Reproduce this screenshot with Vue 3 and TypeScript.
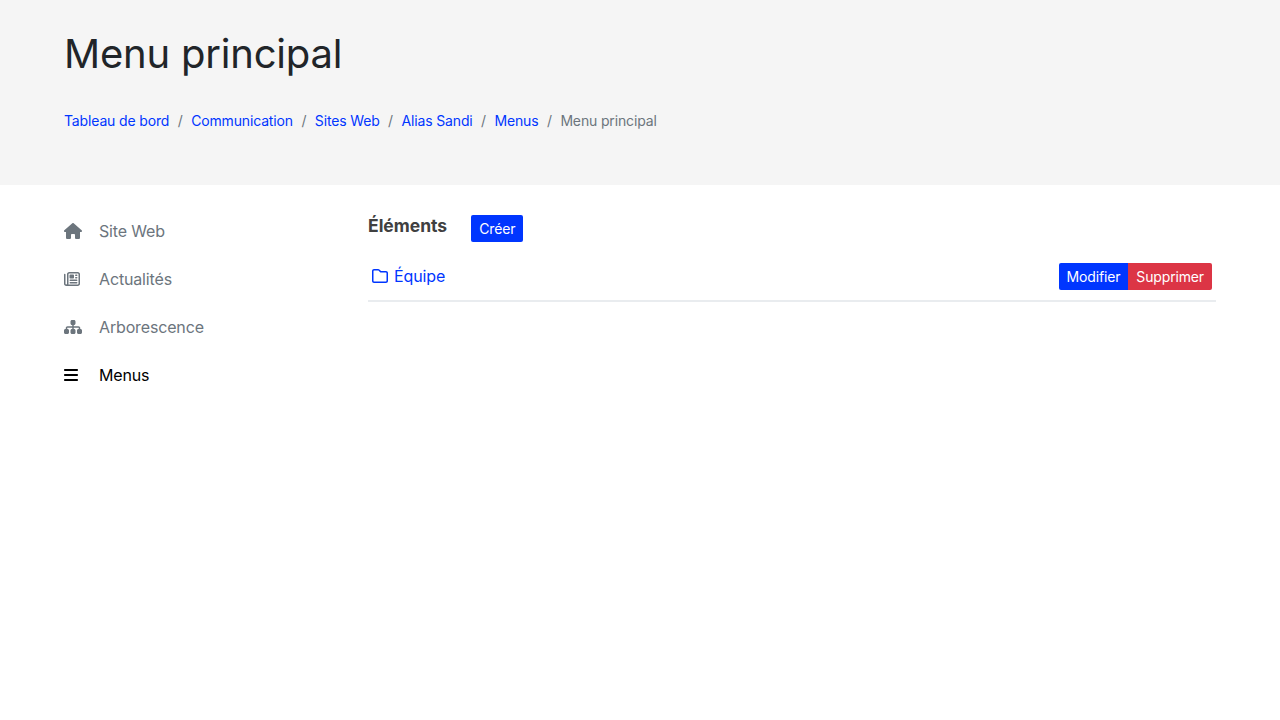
<script setup lang="ts">
interface Crumb {
  label: string
  active?: boolean
}

interface NavItem {
  label: string
  icon: string
  viewBox: string
  active?: boolean
}

const crumbs: Crumb[] = [
  { label: 'Tableau de bord' },
  { label: 'Communication' },
  { label: 'Sites Web' },
  { label: 'Alias Sandi' },
  { label: 'Menus' },
  { label: 'Menu principal', active: true },
]

const navItems: NavItem[] = [
  {
    label: 'Site Web',
    viewBox: '0 0 576 512',
    icon: 'M575.8 255.5c0 18-15 32.1-32 32.1h-32l.7 160.2c0 2.7-.2 5.4-.5 8.1V472c0 22.1-17.9 40-40 40H456c-1.1 0-2.2 0-3.3-.1c-1.4 .1-2.8 .1-4.2 .1H416 392c-22.1 0-40-17.9-40-40V448 384c0-17.7-14.3-32-32-32H256c-17.7 0-32 14.3-32 32v64 24c0 22.1-17.9 40-40 40H160 128.1c-1.5 0-3-.1-4.5-.2c-1.2 .1-2.4 .2-3.6 .2H104c-22.1 0-40-17.9-40-40V360c0-.9 0-1.9 .1-2.8V287.6H32c-18 0-32-14-32-32.1c0-9 3-17 10-24L266.4 8c7-7 15-8 22-8s15 2 21 7L564.8 231.5c8 7 12 15 11 24z',
  },
  {
    label: 'Actualités',
    viewBox: '0 0 512 512',
    icon: 'M168 80c-13.3 0-24 10.7-24 24V408c0 8.4-1.4 16.5-4.1 24H440c13.3 0 24-10.7 24-24V104c0-13.3-10.7-24-24-24H168zM72 480c-39.8 0-72-32.2-72-72V112C0 98.7 10.7 88 24 88s24 10.7 24 24V408c0 13.3 10.7 24 24 24s24-10.7 24-24V104c0-39.8 32.2-72 72-72H440c39.8 0 72 32.2 72 72V408c0 39.8-32.2 72-72 72H72zM176 136c0-13.3 10.7-24 24-24h96c13.3 0 24 10.7 24 24v80c0 13.3-10.7 24-24 24H200c-13.3 0-24-10.7-24-24V136zm200-24h32c13.3 0 24 10.7 24 24s-10.7 24-24 24H376c-13.3 0-24-10.7-24-24s10.7-24 24-24zm0 80h32c13.3 0 24 10.7 24 24s-10.7 24-24 24H376c-13.3 0-24-10.7-24-24s10.7-24 24-24zM200 272H408c13.3 0 24 10.7 24 24s-10.7 24-24 24H200c-13.3 0-24-10.7-24-24s10.7-24 24-24zm0 80H408c13.3 0 24 10.7 24 24s-10.7 24-24 24H200c-13.3 0-24-10.7-24-24s10.7-24 24-24z',
  },
  {
    label: 'Arborescence',
    viewBox: '0 0 576 512',
    icon: 'M208 80c0-26.5 21.5-48 48-48h64c26.5 0 48 21.5 48 48v64c0 26.5-21.5 48-48 48h-8v40H464c30.9 0 56 25.1 56 56v32h8c26.5 0 48 21.5 48 48v64c0 26.5-21.5 48-48 48H464c-26.5 0-48-21.5-48-48V368c0-26.5 21.5-48 48-48h8V288c0-4.4-3.6-8-8-8H312v40h8c26.5 0 48 21.5 48 48v64c0 26.5-21.5 48-48 48H256c-26.5 0-48-21.5-48-48V368c0-26.5 21.5-48 48-48h8V280H112c-4.4 0-8 3.6-8 8v32h8c26.5 0 48 21.5 48 48v64c0 26.5-21.5 48-48 48H48c-26.5 0-48-21.5-48-48V368c0-26.5 21.5-48 48-48h8V288c0-30.9 25.1-56 56-56H264V192h-8c-26.5 0-48-21.5-48-48V80z',
  },
  {
    label: 'Menus',
    viewBox: '0 0 448 512',
    active: true,
    icon: 'M0 96C0 78.3 14.3 64 32 64H416c17.7 0 32 14.3 32 32s-14.3 32-32 32H32C14.3 128 0 113.7 0 96zM0 256c0-17.7 14.3-32 32-32H416c17.7 0 32 14.3 32 32s-14.3 32-32 32H32c-17.7 0-32-14.3-32-32zM448 416c0 17.7-14.3 32-32 32H32c-17.7 0-32-14.3-32-32s14.3-32 32-32H416c17.7 0 32 14.3 32 32z',
  },
]
</script>

<template>
  <header class="page-header">
    <h1>Menu principal</h1>
    <nav class="breadcrumb">
      <template v-for="(crumb, index) in crumbs" :key="crumb.label">
        <span v-if="index > 0" class="sep">/</span>
        <span v-if="crumb.active" class="current">{{ crumb.label }}</span>
        <a v-else href="#">{{ crumb.label }}</a>
      </template>
    </nav>
  </header>

  <main class="layout">
    <aside class="sidebar">
      <a
        v-for="item in navItems"
        :key="item.label"
        href="#"
        class="nav-item"
        :class="{ active: item.active }"
      >
        <span class="nav-icon">
          <svg :viewBox="item.viewBox" height="16" fill="currentColor">
            <path :d="item.icon" />
          </svg>
        </span>
        {{ item.label }}
      </a>
    </aside>

    <section class="content">
      <div class="content-head">
        <h2>Éléments</h2>
        <a href="#" class="btn primary">Créer</a>
      </div>
      <div class="row">
        <a href="#" class="row-link">
          <svg viewBox="0 0 512 512" width="16" height="16" fill="currentColor">
            <path d="M0 96C0 60.7 28.7 32 64 32H196.1c19.1 0 37.4 7.6 50.9 21.1L289.9 96H448c35.3 0 64 28.7 64 64V416c0 35.3-28.7 64-64 64H64c-35.3 0-64-28.7-64-64V96zM64 80c-8.8 0-16 7.2-16 16V416c0 8.8 7.2 16 16 16H448c8.8 0 16-7.2 16-16V160c0-8.8-7.2-16-16-16H286.6c-10.6 0-20.8-4.2-28.3-11.7L213.1 87c-4.5-4.5-10.6-7-17-7H64z" />
          </svg>
          Équipe
        </a>
        <div class="btn-group">
          <a href="#" class="btn primary">Modifier</a>
          <a href="#" class="btn danger">Supprimer</a>
        </div>
      </div>
    </section>
  </main>
</template>

<style>
body {
  background: #fff;
  font-family: Inter, "Liberation Sans", sans-serif;
}
</style>

<style scoped>
.page-header {
  box-sizing: border-box;
  height: 185px;
  padding: 30px 64px 0;
  background: #f5f5f5;
}
h1 {
  margin: 0;
  font-size: 40px;
  font-weight: 400;
  line-height: 48px;
  letter-spacing: -0.2px;
  color: #212529;
}
.breadcrumb {
  display: flex;
  margin-top: 32px;
  font-size: 14px;
  line-height: 21px;
  letter-spacing: -0.15px;
}
.breadcrumb a {
  color: #0036ff;
  text-decoration: none;
}
.sep {
  padding: 0 8.5px;
  color: #6c757d;
}
.current {
  color: #6c757d;
}
.layout {
  display: grid;
  grid-template-columns: 304px 848px;
  padding: 0 64px;
}
.sidebar {
  display: flex;
  flex-direction: column;
  padding-top: 22px;
}
.nav-item {
  display: flex;
  align-items: center;
  height: 48px;
  font-size: 16px;
  letter-spacing: -0.15px;
  color: #6c757d;
  text-decoration: none;
}
.nav-item.active {
  color: #000;
}
.nav-icon {
  display: flex;
  flex: none;
  width: 35px;
}
.content {
  padding-top: 30px;
}
.content-head {
  display: flex;
  align-items: flex-start;
  gap: 24px;
}
h2 {
  margin: 0;
  font-size: 17.5px;
  font-weight: 700;
  line-height: 21px;
  color: #404040;
}
.btn {
  display: block;
  padding: 0 8px;
  font-size: 14px;
  line-height: 27px;
  letter-spacing: -0.15px;
  color: #fff;
  text-decoration: none;
  border-radius: 2px;
}
.primary {
  background: #0036ff;
}
.danger {
  background: #dc3545;
}
.row {
  display: flex;
  align-items: center;
  justify-content: space-between;
  box-sizing: border-box;
  height: 49px;
  margin-top: 11px;
  padding: 0 4px 1px;
  border-bottom: 2px solid #e9ecef;
}
.row-link {
  display: flex;
  align-items: center;
  gap: 6px;
  font-size: 16px;
  letter-spacing: -0.1px;
  color: #0036ff;
  text-decoration: none;
}
.btn-group {
  display: flex;
}
.btn-group .btn:first-child {
  border-radius: 2px 0 0 2px;
}
.btn-group .btn:last-child {
  border-radius: 0 2px 2px 0;
}
</style>
